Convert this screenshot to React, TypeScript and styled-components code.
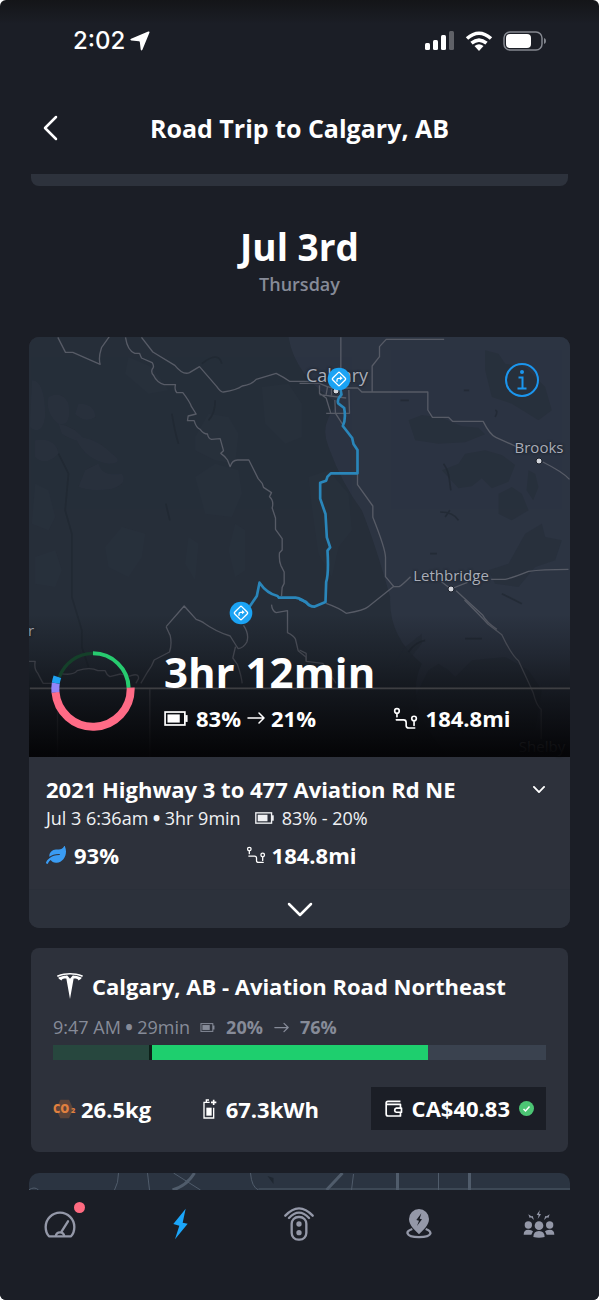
import React from "react";
import styled, { createGlobalStyle } from "styled-components";
import { FaLeaf } from "react-icons/fa";
import { SiTesla } from "react-icons/si";

const GlobalStyle = createGlobalStyle`
  *, *::before, *::after { box-sizing: border-box; }
  body { margin: 0; background: #fff; }
  button { border: 0; padding: 0; background: none; color: inherit; font: inherit; cursor: pointer; }
  h1, h2, h3, p { margin: 0; }
  svg { display: block; flex: none; }
`;

const Screen = styled.div`
  display: flex;
  flex-direction: column;
  min-height: 100vh;
  overflow: hidden;
  border-radius: 6px;
  background: linear-gradient(#141518, #1b1e26 24px);
  color: #fff;
  font-family: "Open Sans", "Noto Sans", sans-serif;
  font-size: 18px;
`;

/* ---------- status bar and header ---------- */

const StatusBar = styled.div`
  display: flex;
  align-items: center;
  justify-content: space-between;
  height: 82px;
  padding: 0 52px 0 73px;
`;

const StatusGroup = styled.div<{ $gap: number }>`
  display: flex;
  align-items: center;
  gap: ${(p) => p.$gap}px;
`;

const Clock = styled.span`
  font-family: Inter, sans-serif;
  font-size: 24px;
  font-weight: 500;
  line-height: 32px;
`;

const Header = styled.header`
  display: grid;
  grid-template-columns: 40px 1fr 40px;
  align-items: center;
  height: 92px;
  padding: 0 30px;
`;

const IconButton = styled.button<{ $size: number }>`
  display: grid;
  place-items: center;
  width: ${(p) => p.$size}px;
  height: ${(p) => p.$size}px;
`;

const Title = styled.h1`
  font-size: 25px;
  font-weight: 700;
  line-height: 30px;
  text-align: center;
  white-space: nowrap;
`;

/* ---------- scrolling content ---------- */

const Content = styled.main`
  flex: 1;
  padding: 0 29px;
`;

const CardEnd = styled.div`
  height: 12px;
  margin: 0 2px;
  border-radius: 0 0 8px 8px;
  background: #2d323c;
`;

const DayHeading = styled.div`
  padding: 36px 0 40px;
  text-align: center;
`;

const Day = styled.h2`
  font-size: 37px;
  font-weight: 700;
  line-height: 50px;
`;

const Weekday = styled.p`
  color: #868b98;
  font-size: 18px;
  font-weight: 600;
  line-height: 25px;
`;

const TripCard = styled.section`
  overflow: hidden;
  border-radius: 10px;
  background: #2d313b;
`;

const MapPane = styled.div`
  position: relative;
  height: 420px;
  background: #262e39;
`;

const MapSvg = styled.svg`
  width: 100%;
  height: 100%;
`;

const Place = styled.span<{ $x: number; $y: number; $size: number }>`
  position: absolute;
  left: ${(p) => p.$x}px;
  top: ${(p) => p.$y}px;
  color: #a9adb8;
  font-size: ${(p) => p.$size}px;
  line-height: 22px;
  white-space: nowrap;
  transform: translate(-50%, -50%);
  text-shadow: 0 0 3px #1b202a, 0 0 2px #1b202a;
`;

const Dot = styled.span<{ $x: number; $y: number }>`
  position: absolute;
  left: ${(p) => p.$x}px;
  top: ${(p) => p.$y}px;
  width: 7px;
  height: 7px;
  border: 1px solid #1b202a;
  border-radius: 50%;
  background: #d4d6dc;
  transform: translate(-50%, -50%);
`;

const Pin = styled.span<{ $x: number; $y: number }>`
  position: absolute;
  left: ${(p) => p.$x}px;
  top: ${(p) => p.$y}px;
  transform: translate(-50%, -50%);
`;

const InfoButton = styled(IconButton)`
  position: absolute;
  top: 26px;
  right: 31px;
`;

const Shade = styled.div`
  position: absolute;
  inset: 0;
  background: linear-gradient(
    rgba(8, 9, 12, 0) 66%,
    rgba(8, 9, 12, 0.3) 76%,
    rgba(8, 9, 12, 0.68) 86%,
    rgba(4, 4, 6, 0.97) 99%
  );
`;

const Summary = styled.div`
  position: absolute;
  inset: auto 0 0 0;
  display: flex;
  align-items: center;
  gap: 29px;
  padding: 0 25px 24px 22px;
`;

const SummaryText = styled.div`
  display: grid;
  flex: 1;
  gap: 4px;
`;

const Duration = styled.h3`
  font-size: 42px;
  font-weight: 700;
  line-height: 54px;
`;

const StatColumns = styled.div<{ $columns: string }>`
  display: grid;
  grid-template-columns: ${(p) => p.$columns};
`;

const Stat = styled.span<{ $gap: number }>`
  display: flex;
  align-items: center;
  gap: ${(p) => p.$gap}px;
  font-size: 22px;
  font-weight: 700;
  line-height: 30px;
  white-space: nowrap;
`;

const Leg = styled.div`
  padding: 17px 25px 19px 17px;
`;

const LegHead = styled.div`
  display: flex;
  align-items: center;
  justify-content: space-between;
`;

const Heading = styled.h3`
  font-size: 22px;
  font-weight: 700;
  line-height: 30px;
  white-space: nowrap;
`;

const Meta = styled.div<{ $muted?: boolean }>`
  display: flex;
  align-items: center;
  gap: 8px;
  color: ${(p) => (p.$muted ? "#868b98" : "#f0f1f4")};
  line-height: 26px;
  white-space: nowrap;
`;

const Bullet = styled.span`
  font-weight: 800;
`;

const LegMeta = styled(Meta)`
  margin: 1px 0 9px;
  svg { margin-left: 6px; }
`;

const Expand = styled.button`
  display: grid;
  place-items: center;
  width: 100%;
  height: 39px;
  border-top: 1px solid #2a2f39;
  background: #2c313b;
`;

/* ---------- charging stop ---------- */

const ChargeCard = styled.section`
  margin: 20px 2px 21px;
  padding: 23px 22px 22px;
  border-radius: 8px;
  background: #2d313b;
`;

const ChargeHead = styled.div`
  display: flex;
  align-items: center;
  gap: 9px;
  padding-left: 4px;
`;

const ChargeMeta = styled(Meta)`
  gap: 10px;
  margin: 13px 0 5px;
  b { font-weight: 700; margin: 0 1px; }
`;

const Bar = styled.div`
  display: flex;
  height: 15px;
  background: #3a424f;
`;

const BarPart = styled.div<{ $color: string }>`
  background: ${(p) => p.$color};
`;

const ChargeStats = styled.div`
  display: flex;
  align-items: center;
  justify-content: space-between;
  margin-top: 27px;
`;

const Price = styled.button`
  padding: 6px 12px 7px 14px;
  background: #1b1e26;
`;

const NextMap = styled.div`
  height: 17px;
  overflow: hidden;
  border-radius: 10px 10px 0 0;
  background: #2b3441;
`;

/* ---------- tab bar ---------- */

const Tabs = styled.nav`
  display: grid;
  grid-template-columns: repeat(5, 1fr);
  height: 110px;
  padding-top: 14px;
  background: #1b1e26;
`;

const Tab = styled.button<{ $active?: boolean }>`
  display: grid;
  place-items: center;
  height: 40px;
  color: ${(p) => (p.$active ? "#1ba6fa" : "#9498a8")};
`;

const Badged = styled.span`
  position: relative;
  &::after {
    content: "";
    position: absolute;
    top: -9px;
    right: -9px;
    width: 11px;
    height: 11px;
    border-radius: 50%;
    background: #ff6b81;
  }
`;

/* ---------- icons ---------- */

const Battery = ({ width }: { width: number }) => (
  <svg width={width} height={Math.round(width * 0.63)} viewBox="0 0 70 44" fill="none" aria-hidden>
    <rect x="3" y="3" width="58" height="38" stroke="currentColor" strokeWidth="5" />
    <rect x="10" y="10" width="36" height="24" fill="currentColor" />
    <path d="M62 12h7v20h-7z" fill="currentColor" />
  </svg>
);

const Route = ({ width }: { width: number }) => (
  <svg width={width} height={Math.round(width * 0.92)} viewBox="0 0 76 70" fill="none" stroke="currentColor" strokeWidth="5" strokeLinecap="round" aria-hidden>
    <circle cx="12" cy="12" r="7" />
    <path d="M12 20v10M10 39h22q8 0 8 8v10q0 7 8 7h18M64 44v12" />
    <circle cx="64" cy="35" r="7" />
  </svg>
);

const Arrow = ({ width }: { width: number }) => (
  <svg width={width} height={width} viewBox="0 0 18 18" fill="none" stroke="currentColor" strokeWidth="1.500" strokeLinecap="round" strokeLinejoin="round" role="img" aria-label="to">
    <path d="M1 9h16M12 4l5 5l-5 5" />
  </svg>
);

const Chevron = ({ width, weight }: { width: number; weight: number }) => (
  <svg width={width} height={Math.round(width * 0.58)} viewBox="0 0 26 15" fill="none" stroke="currentColor" strokeWidth={weight} strokeLinecap="round" strokeLinejoin="round" aria-hidden>
    <path d="M2 2l11 11L24 2" />
  </svg>
);

const Waypoint = () => (
  <svg width="24" height="24" viewBox="0 0 72 72" fill="none" aria-hidden>
    <circle cx="36" cy="36" r="34" fill="#1ba3f4" />
    <rect x="21" y="21" width="30" height="30" rx="3" transform="rotate(45 36 36)" stroke="#fff" strokeWidth="4" />
    <path d="M30 44v-5q0-5 5-5h6" stroke="#fff" strokeWidth="4" />
    <path d="M39 27l8 7l-8 6z" fill="#fff" />
  </svg>
);

const RING = [
  { from: 200, to: 270, r: 107, w: 10, color: "#15402a" },
  { from: 270, to: 358, r: 107, w: 12, color: "#27cb6f" },
  { from: -2, to: 175, r: 113, w: 24, color: "#ff6b86" },
  { from: 175, to: 189, r: 113, w: 24, color: "#9385f8" },
  { from: 189, to: 199, r: 113, w: 24, color: "#1fa2f2" },
];

const EnergyRing = () => (
  <svg width="84" height="84" viewBox="-126 -126 252 252" fill="none" role="img" aria-label="Energy use">
    {RING.map((s) => (
      <circle
        key={s.color}
        r={s.r}
        stroke={s.color}
        strokeWidth={s.w}
        pathLength={360}
        strokeDasharray={`${s.to - s.from} ${360 - s.to + s.from}`}
        transform={`rotate(${s.from})`}
      />
    ))}
  </svg>
);

/* Map drawing, three units to the pixel; each group is one quarter of the area. */
const TripMap = () => (
  <MapSvg viewBox="0 0 1626 1260" preserveAspectRatio="xMidYMid slice" aria-hidden>
    <path d="M780 0H1626V1260H1260Q1120 1100 1180 980Q1080 900 1085 780Q1040 620 1000 520Q940 440 900 330Q870 260 930 200Q800 120 780 0Z" fill="#2c3442" />
    <g fill="#2e3747" opacity=".35">
      <path d="M10 130q40 0 40 110q-10 60-45 30zM60 180q40-20 60 20q10 70-30 60q-40-30-30-80z" />
      <path d="M150 200q50 0 50 40q-30 20-60-10zM90 260q50 10 80 50q-20 10-70-20z" />
      <path d="M140 300q60 0 110 50q40 30-10 30q-70-10-100-80zM20 310q60-10 70 40q-40 40-70 10z" />
      <path d="M170 400l40-20q10 40 70 30q20 30-30 45q-60 10-100-5z" />
    </g>
    <g fill="#2b3441" opacity=".35">
      <path d="M500 300l40-70l60 10l30 50l-10 90l-60-10l-60-30zM500 420l60-40l70 20l10 70l-30 70l-80-10z" />
      <path d="M230 630l50-60l70 20l-10 70l-40 60l-60-30zM480 600l30 20l-10 110l-30-50zM620 560l30 20v120l-30 20l-20-80z" />
      <path d="M20 660l60-20l20 60l-20 50l-60-10zM20 440l40 20l20 80l-20 40l-50-20zM700 150l80-10l40 60v100l-50 20l-60-60z" />
      <path d="M840 420l60-20l60 70l10 110l-40 50l-20 90l-40-70l-20-140zM300 60l70 30l50 70l-60 10l-70-60z" />
    </g>
    <g fill="#262e3a" opacity=".65">
      <path d="M1140 250l40-16l60 8l60 26l50 4l20 20l-60 24l-80 4l-70-10z" />
      <path d="M1240 400l50-20l20-30l60-10l50 14l40 30l-20 50l-50 20l-30-30l-30 24l-40 6z" />
      <path d="M1500 400l20 10l10 40l-16 40l-20-30zM1410 470l40-20l30 20l20 50l-50 30l-40-20zM1490 590l50-30l10 40l50 10l-20 60l-60 20l-50 60l-70-10l-20-40l60-20z" />
      <path d="M1130 930l50-40v30l-50 60l-40 10zM1200 1000l30-20l30 20l20 20l50-50l100-10l70 40l40 60l-20 120h-320l-60-60z" />
      <path d="M1370 40l40 10l20 30l60 10l60 60l20 70l-40 30l-80-50l-60-20l-20-80z" />
    </g>
    <g fill="none" stroke="#1f2730" strokeWidth="5" opacity=".65">
      <path d="M90 350l30 60l-10 110l20 70v190l30 100v50l20 60M412 500l12 50M430 230q10 60 20 90M520 80q50-40 60 0M560 190q0 40-20 60" />
      <path d="M1245 380q15 20 18 50l4 30M1235 525q40 0 55 25M1250 540l14-20M1116 190h25M1306 160h16M1400 220q10 0 0 20M1420 770q40 20 60 30M1205 650h20M1140 945q20-30 50-35M1310 905h50" />
    </g>
    <g fill="none" stroke="#575b66" strokeWidth="4" strokeLinejoin="round">
      <g transform="translate(-27 -21)">
        <path d="M115 22l23 45h22l82 36q-6-20 4-50l24-34M366 22l34 44l66 40q24 30 44 22l30-18l52 60q12 18 20 16q40-6 56-18q28-4 42-20l60-18q24 12 40 24h60" />
        <path d="M318 22q6 40 28 48h14l6 14l32 14q8 12 0 20q-4 10 4 18q10 22 32 28h34q-4 16 4 24h18q20 26 26 42l14 22l-24 6l-2 14h20q6 22 18 26q10 14 22 14q2 14 12 16l26-2l10 36l-8 8q14 10 20 20l8 20q6-20 22-20h34q20 40 28 56l12 14l4 12l24 16l-6 12q14 12 8 34l10 30v34q16 22 20 28v34l-8 8q-2 24 4 38l10 20v34l-6 12l-2 26" />
      </g>
      <g transform="translate(813 -21)">
        <path d="M124 22v150M434 28H260l-20 22v30l-22 28v76M0 160h60q20 10 40 14h75l12 12h198v54l14 22h48l12 12h92q20 40 38 48l80 36M730 396q60 30 80 52" />
        <path d="M174 430v34l46 64v34q40 100 38 124v54l25 30h16q10-6 34-30M60 166v24l20 14l14 46M84 170l-4 24M96 176v20M60 194l80 10M80 250h70l-2-70M106 210l2 40l22 34" />
        <path d="M80 820q40 14 60 30q56-10 66-20l78-62M426 755l28 22l50-20M575 748h42q20-4 70-24q40-6 120-6M470 782l80 74q10 20 42 42" />
      </g>
      <g transform="translate(-27 789)">
        <path d="M756 14q2 20 14 24l34-6v66q20 10 24 20l8 34l24 20v10M440 80l54-62l36 40q16 6 22 10q36 26 80 40q16 26 24 38q16-2 26-20q8-24-10-50M440 80q8 18 12 26q6 26-2 50l-46 24q-6 18-20 36l-20 34M648 140l-8 34l14 20q12 34 14 56M27 184h20q-4 24 8 36q10 20 16 30h26q24-14 24-30q40 8 52-8q40-12 62 0h22q4 12 14 18l32-8q26 10 34 4q22-6 20 10l-8 14" />
      </g>
      <g transform="translate(813 789)">
        <path d="M495 0q60 60 70 72l42 32q28 60 50 78l34 74l10 22q10 40 24 50v90M0 150l20 10v24l50 6l40 60" />
      </g>
      <path d="M4 1054H1626" stroke="#8b8b90" strokeWidth="5" />
      <path d="M87 1056v204M364 1056v204" />
    </g>
    <g fill="none" stroke="#2a86ba" strokeWidth="8" strokeLinejoin="round">
      <path transform="translate(813 -21)" d="M118 150l8 44q-14 14-10 26l18 14q6 34-4 54l28 36l4 18l12 18v70H94l-10 10l-4 12l-18 6v48l16 46l4 70l10 30l-8 10q4 70-4 94l-2 60l-34 14q-14 0-24-14L0 808" />
      <path transform="translate(-27 -21)" d="M690 830l22-32l8-40q22 32 54 40l4 5h50q20 2 42 24" />
    </g>
  </MapSvg>
);

const NextMapArt = () => (
  <svg width="100%" height="17" viewBox="0 0 542 17" preserveAspectRatio="xMidYMin slice" fill="none" stroke="#505c6b" aria-hidden>
    <path d="M90 0q0 10-4 17M119 0l2 17M145 0l27 17M222 0q1 14 8 17M325 1l-2 16M410 0v17M0 17q6-4 10 0M230 16h312" strokeWidth="1" />
    <path d="M166 0q-8 13-22 17M314 0l-16 17M369 0v17M441 0v17" strokeWidth="3" />
    <path d="M239 3l6 8v-6z" fill="#1f2731" stroke="none" />
  </svg>
);

const App = () => (
  <>
    <GlobalStyle />
    <Screen>
      <StatusBar>
        <StatusGroup $gap={5}>
          <Clock>2:02</Clock>
          <svg width="20" height="20" viewBox="0 0 20 20" fill="currentColor" aria-hidden>
            <path d="M18.200 .6Q20 0 19.400 1.800L12.400 18.800Q11.400 20.500 10.700 18.600L9.800 10.900Q9.700 10.300 9 10.200L1.300 9.400Q-.6 8.600 1.100 7.700Z" />
          </svg>
        </StatusGroup>
        <StatusGroup $gap={10}>
          <svg width="31" height="20" viewBox="0 0 31 20" fill="currentColor" aria-hidden>
            <rect x="1" y="12" width="5" height="7" rx="1.500" />
            <rect x="9" y="9" width="5" height="10" rx="1.500" />
            <rect x="17" y="4" width="5" height="15" rx="1.500" />
            <rect x="25" width="5" height="19" rx="1.500" opacity=".3" />
          </svg>
          <svg width="28" height="20" viewBox="0 0 28 20" fill="none" stroke="currentColor" strokeWidth="3.600" aria-hidden>
            <path d="M2 7.500Q14-3 26 7.500M6.500 12.200Q14 6 21.500 12.200" />
            <path d="M9.500 15Q14 11.500 18.500 15L14 20Z" fill="currentColor" stroke="none" />
          </svg>
          <svg width="44" height="20" viewBox="0 0 44 20" aria-hidden>
            <rect x="1" y="1" width="38" height="18" rx="6" fill="none" stroke="#858890" strokeWidth="1.500" />
            <rect x="3" y="3" width="25" height="14" rx="4" fill="#fff" />
            <path d="M41 7q2 .5 2 3t-2 3z" fill="#858890" />
          </svg>
        </StatusGroup>
      </StatusBar>

      <Header>
        <IconButton $size={40} aria-label="Back">
          <svg width="15" height="26" viewBox="0 0 15 26" fill="none" stroke="currentColor" strokeWidth="2.500" strokeLinecap="round" strokeLinejoin="round">
            <path d="M13 2L2 13L13 24" />
          </svg>
        </IconButton>
        <Title>Road Trip to Calgary, AB</Title>
      </Header>

      <Content>
        <CardEnd />
        <DayHeading>
          <Day>Jul 3rd</Day>
          <Weekday>Thursday</Weekday>
        </DayHeading>

        <TripCard>
          <MapPane>
            <TripMap />
            <Place $x={308} $y={38} $size={18}>Calgary</Place>
            <Place $x={510} $y={110} $size={15}>Brooks</Place>
            <Place $x={422} $y={238} $size={15}>Lethbridge</Place>
            <Place $x={2} $y={293} $size={15}>r</Place>
            <Dot $x={307} $y={54} />
            <Dot $x={510} $y={124} />
            <Dot $x={422} $y={252} />
            <Place $x={513} $y={409} $size={15}>Shelby</Place>
            <Shade />
            <Pin $x={310} $y={42}><Waypoint /></Pin>
            <Pin $x={212} $y={276}><Waypoint /></Pin>
            <InfoButton $size={34} aria-label="Trip information">
              <svg width="34" height="34" viewBox="0 0 34 34" fill="none" stroke="#1b96ee" strokeWidth="2">
                <circle cx="17" cy="17" r="16" />
                <path d="M13.500 14.500H17.500V25M12.500 25.500h9" />
                <circle cx="17" cy="9" r="2" fill="#1b96ee" stroke="none" />
              </svg>
            </InfoButton>
            <Summary>
              <EnergyRing />
              <SummaryText>
                <Duration>3hr 12min</Duration>
                <StatColumns $columns="3fr 2fr">
                  <Stat $gap={8}>
                    <Battery width={24} />
                    <Stat $gap={6}>83% <Arrow width={18} /> 21%</Stat>
                  </Stat>
                  <Stat $gap={8}><Route width={25} />184.8mi</Stat>
                </StatColumns>
              </SummaryText>
            </Summary>
          </MapPane>

          <Leg>
            <LegHead>
              <Heading>2021 Highway 3 to 477 Aviation Rd NE</Heading>
              <IconButton $size={12} aria-label="Leg details"><Chevron width={12} weight={4} /></IconButton>
            </LegHead>
            <LegMeta>
              <span>Jul 3 6:36am <Bullet>•</Bullet> 3hr 9min</span>
              <Battery width={19} />
              <span>83% - 20%</span>
            </LegMeta>
            <StatColumns $columns="2fr 3fr">
              <Stat $gap={8}><FaLeaf size={20} color="#3a9cf3" />93%</Stat>
              <Stat $gap={6}><Route width={20} />184.8mi</Stat>
            </StatColumns>
          </Leg>
          <Expand aria-label="Show more"><Chevron width={26} weight={2.5} /></Expand>
        </TripCard>

        <ChargeCard>
          <ChargeHead>
            <SiTesla size={26} />
            <Heading>Calgary, AB - Aviation Road Northeast</Heading>
          </ChargeHead>
          <ChargeMeta $muted>
            <span>9:47 AM <Bullet>•</Bullet> 29min</span>
            <Battery width={15} />
            <b>20%</b>
            <Arrow width={15} />
            <b>76%</b>
          </ChargeMeta>
          <Bar role="img" aria-label="Charged from 20% to 76%">
            <BarPart $color="#27473e" style={{ width: "19.5%" }} />
            <BarPart $color="#0d2018" style={{ width: "0.5%" }} />
            <BarPart $color="#1ecf6e" style={{ width: "56%" }} />
          </Bar>
          <ChargeStats>
            <Stat $gap={5}>
              <svg width="23" height="20" viewBox="0 0 69 60" aria-label="Carbon dioxide" role="img">
                <path d="M22 2h26l13 28l-13 28H22L9 30z" fill="#5c4439" />
                <text x="0" y="42" fill="#e0803f" fontFamily="Open Sans, sans-serif" fontWeight="800" fontSize="34">CO</text>
                <text x="54" y="43" fill="#e0803f" fontFamily="Open Sans, sans-serif" fontWeight="800" fontSize="22">2</text>
              </svg>
              26.5kg
            </Stat>
            <Stat $gap={9}>
              <svg width="14" height="20" viewBox="0 0 42 60" fill="none" stroke="currentColor" strokeWidth="4" aria-hidden>
                <path d="M20 10H3v47h29V26M10 8V3h8" />
                <path d="M32 2v16M24 10h16" strokeWidth="5" />
                <path d="M10 26h16v24H10z" fill="currentColor" stroke="none" />
              </svg>
              67.3kWh
            </Stat>
            <Price>
              <Stat $gap={9}>
                <svg width="18" height="17" viewBox="0 0 52 50" fill="none" stroke="currentColor" strokeWidth="5" strokeLinejoin="round" aria-hidden>
                  <path d="M45 4H8q-5 0-5 5v32q0 6 6 6h36V37M3 13h42v12M33 24h15v12H33q-5-1-5-6t5-6z" />
                </svg>
                CA$40.83
                <svg width="15" height="15" viewBox="0 0 15 15" aria-label="Paid" role="img">
                  <circle cx="7.500" cy="7.500" r="7.500" fill="#4cc574" />
                  <path d="M4.500 8l2 2l4-4.500" fill="none" stroke="#fff" strokeWidth="1.500" />
                </svg>
              </Stat>
            </Price>
          </ChargeStats>
        </ChargeCard>

        <NextMap><NextMapArt /></NextMap>
      </Content>

      <Tabs aria-label="Main">
        <Tab aria-label="Dashboard">
          <Badged>
            <svg width="32" height="27" viewBox="0 0 96 81" fill="none" stroke="currentColor" strokeWidth="7" strokeLinejoin="round">
              <path d="M15 76Q5 65 5 48a43 43 0 0 1 86 0q0 17-10 28z" />
              <path d="M35 76q2-12 13-12t13 12" />
              <path d="M53 61l19-30" strokeLinecap="round" />
            </svg>
          </Badged>
        </Tab>
        <Tab $active aria-label="Trips">
          <svg width="16" height="32" viewBox="0 0 48 96" fill="currentColor">
            <path d="M41 2L4 48l18 5L9 94L47 47l-15-3z" />
          </svg>
        </Tab>
        <Tab aria-label="Remote">
          <svg width="30" height="34" viewBox="0 0 90 102" fill="none" stroke="currentColor" strokeWidth="7" strokeLinecap="round">
            <path d="M4 26Q45-18 86 26M15 33Q45 1 75 33" />
            <rect x="23" y="30" width="44" height="68" rx="20" />
            <circle cx="45" cy="51" r="8" fill="currentColor" stroke="none" />
            <circle cx="45" cy="77" r="8" fill="currentColor" stroke="none" />
          </svg>
        </Tab>
        <Tab aria-label="Chargers">
          <svg width="26" height="30" viewBox="0 0 78 90">
            <path d="M19 60C6 64 3 69 5 74C10 88 68 88 73 74Q75 66 59 60" fill="none" stroke="currentColor" strokeWidth="7" />
            <path d="M39 0a30 30 0 0 1 30 30c0 18-16 32-30 46C25 62 9 48 9 30A30 30 0 0 1 39 0z" fill="currentColor" />
            <path d="M46 13L31 33l8 2l-6 16l15-20l-7-2z" fill="#1b1e26" />
          </svg>
        </Tab>
        <Tab aria-label="Community">
          <svg width="32" height="28" viewBox="0 0 96 84" fill="currentColor">
            <circle cx="16" cy="45" r="11" />
            <circle cx="48" cy="47" r="13" />
            <circle cx="80" cy="45" r="11" />
            <path d="M2 74q0-15 14-15q10 0 14 5l-5 10zM94 74q0-15-14-15q-10 0-14 5l5 10z" />
            <path d="M31 81q0-18 17-18t17 18q-17 4-34 0z" />
            <path d="M51 0L41 14l6 2l-3 11l10-14l-6-2zM16 13l4 11l4-2l9 8l-4-12l-4 1zM80 13l-4 11l-4-2l-9 8l4-12l4 1z" />
          </svg>
        </Tab>
      </Tabs>
    </Screen>
  </>
);

export default App;
